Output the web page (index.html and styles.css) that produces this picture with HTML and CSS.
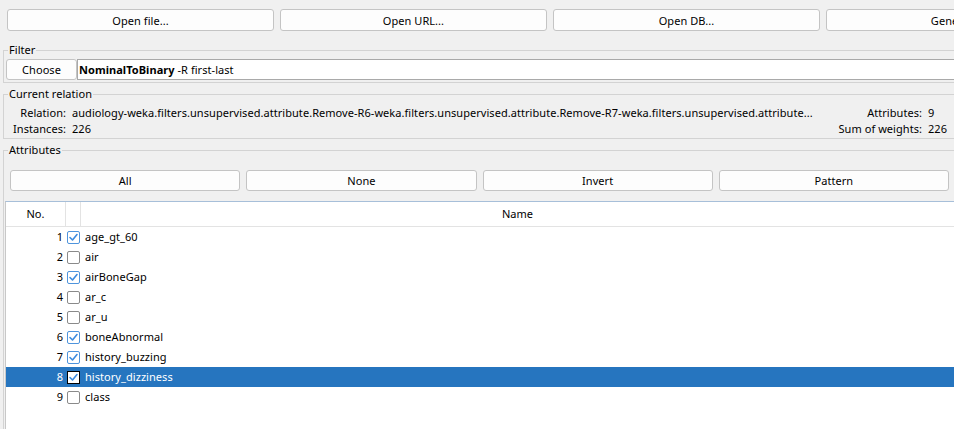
FILE: index.html
```html
<!DOCTYPE html>
<html>
<head>
<meta charset="utf-8">
<title>Preprocess</title>
<link rel="stylesheet" href="styles.css">
</head>
<body>
<div class="app">
  <div class="toolbar">
    <button class="btn tool">Open file...</button>
    <button class="btn tool">Open URL...</button>
    <button class="btn tool">Open DB...</button>
    <button class="btn tool">Generate...</button>
  </div>

  <fieldset class="group filter">
    <legend>Filter</legend>
    <div class="filter-row">
      <button class="btn choose">Choose</button>
      <div class="filter-field"><b>NominalToBinary</b> -R first-last</div>
    </div>
  </fieldset>

  <fieldset class="group relation">
    <legend>Current relation</legend>
    <div class="rel-grid">
      <span class="k">Relation:</span>
      <span class="v rel-name">audiology-weka.filters.unsupervised.attribute.Remove-R6-weka.filters.unsupervised.attribute.Remove-R7-weka.filters.unsupervised.attribute...</span>
      <span class="k">Attributes:</span>
      <span class="v">9</span>
      <span class="k">Instances:</span>
      <span class="v">226</span>
      <span class="k">Sum of weights:</span>
      <span class="v">226</span>
    </div>
  </fieldset>

  <fieldset class="group attributes">
    <legend>Attributes</legend>
    <div class="sel-buttons">
      <button class="btn">All</button>
      <button class="btn">None</button>
      <button class="btn">Invert</button>
      <button class="btn">Pattern</button>
    </div>
    <div class="table">
      <div class="thead">
        <div class="th no">No.</div>
        <div class="th cb"></div>
        <div class="th name">Name</div>
      </div>
      <div class="row"><div class="num">1</div><div class="cbcell"><span class="check on"><svg viewBox="0 0 11 11"><polyline points="2,5.5 4.5,8 9,2.5"/></svg></span></div><div class="nm">age_gt_60</div></div>
      <div class="row"><div class="num">2</div><div class="cbcell"><span class="check"></span></div><div class="nm">air</div></div>
      <div class="row"><div class="num">3</div><div class="cbcell"><span class="check on"><svg viewBox="0 0 11 11"><polyline points="2,5.5 4.5,8 9,2.5"/></svg></span></div><div class="nm">airBoneGap</div></div>
      <div class="row"><div class="num">4</div><div class="cbcell"><span class="check"></span></div><div class="nm">ar_c</div></div>
      <div class="row"><div class="num">5</div><div class="cbcell"><span class="check"></span></div><div class="nm">ar_u</div></div>
      <div class="row"><div class="num">6</div><div class="cbcell"><span class="check on"><svg viewBox="0 0 11 11"><polyline points="2,5.5 4.5,8 9,2.5"/></svg></span></div><div class="nm">boneAbnormal</div></div>
      <div class="row"><div class="num">7</div><div class="cbcell"><span class="check on"><svg viewBox="0 0 11 11"><polyline points="2,5.5 4.5,8 9,2.5"/></svg></span></div><div class="nm">history_buzzing</div></div>
      <div class="row selected"><div class="num">8</div><div class="cbcell"><span class="check on focus"><svg viewBox="0 0 11 11"><polyline points="2,5.5 4.5,8 9,2.5"/></svg></span></div><div class="nm">history_dizziness</div></div>
      <div class="row"><div class="num">9</div><div class="cbcell"><span class="check"></span></div><div class="nm">class</div></div>
    </div>
  </fieldset>
</div>
</body>
</html>
```

FILE: styles.css
```css
* { box-sizing: border-box; }
html, body { margin: 0; height: 100%; overflow: hidden; }
body {
  background: #f0f0f0;
  font-family: "Noto Sans", "Open Sans", sans-serif;
  font-size: 11px;
  letter-spacing: 0.05px;
  color: #000;
}
.app { width: 1200px; }

.btn {
  font: inherit;
  letter-spacing: inherit;
  color: #000;
  background: #fdfdfd;
  border: 1px solid #c4c4c4;
  border-radius: 3px;
  padding: 0;
  height: 21px;
  line-height: 19px;
  text-align: center;
  white-space: nowrap;
  overflow: hidden;
}

.toolbar {
  display: flex;
  gap: 6px;
  padding: 9px 0 0 7px;
}
.toolbar .tool { width: 267px; height: 22px; flex: none; }

.group {
  border: 1px solid #d3d3d3;
  margin: 0 0 0 3px;
  padding: 0;
  min-width: 0;
}
.group legend {
  padding: 0 1px;
  line-height: 16px;
  margin-left: 3px;
}

.filter {
  margin-top: 11px;
  width: 1190px;
  padding: 1px 2px 2px 2px;
}
.filter legend { margin-left: 2px; }
.filter-row { display: flex; }
.choose { width: 71px; flex: none; }
.filter-field {
  flex: 1;
  height: 21px;
  line-height: 19px;
  background: #fff;
  border: 1px solid #a9a9a9;
  padding-left: 1px;
  white-space: nowrap;
}

.relation {
  margin-top: 3px;
  width: 953px;
  padding: 3px 6px 1px 6px;
}
.relation legend { margin-left: -2px; }
.rel-grid {
  display: grid;
  grid-template-columns: 56px 1fr auto 21px;
  column-gap: 6px;
  line-height: 16px;
}
.rel-grid .k { text-align: right; white-space: nowrap; }
.rel-grid .v { white-space: nowrap; overflow: hidden; }

.attributes {
  margin-top: 3px;
  width: 953px;
  padding: 0 1px;
}
.sel-buttons {
  display: grid;
  grid-template-columns: repeat(4, 1fr);
  gap: 6px;
  padding: 12px 5px 10px 5px;
}

.table {
  background: #fff;
  border-top: 1px solid #a7bfd9;
  border-left: 1px solid #c8c8c8;
  height: 300px;
}
.thead {
  display: grid;
  grid-template-columns: 60px 15px 1fr;
  height: 25px;
  border-bottom: 1px solid #e3e3e3;
}
.th {
  line-height: 24px;
  text-align: center;
  border-right: 1px solid #e3e3e3;
}
.th.name { border-right: 0; }

.row {
  display: grid;
  grid-template-columns: 60px 15px 1fr;
  height: 20px;
  line-height: 20px;
  align-items: center;
}
.row.selected { background: #2675bf; color: #fff; }
.num { text-align: right; padding-right: 3px; }
.cbcell { display: flex; align-items: center; padding-left: 1px; }
.nm { padding-left: 4px; }

.check {
  display: block;
  width: 13px;
  height: 13px;
  background: #fff;
  border: 1px solid #8a8a8a;
  border-radius: 2px;
}
.check.on { border-color: #4f94dc; }
.check.focus { border-color: #000; border-radius: 0; }
.check svg { display: block; width: 11px; height: 11px; }
.check polyline {
  fill: none;
  stroke: #3c8be0;
  stroke-width: 1.6;
  stroke-linecap: round;
  stroke-linejoin: round;
}
```
